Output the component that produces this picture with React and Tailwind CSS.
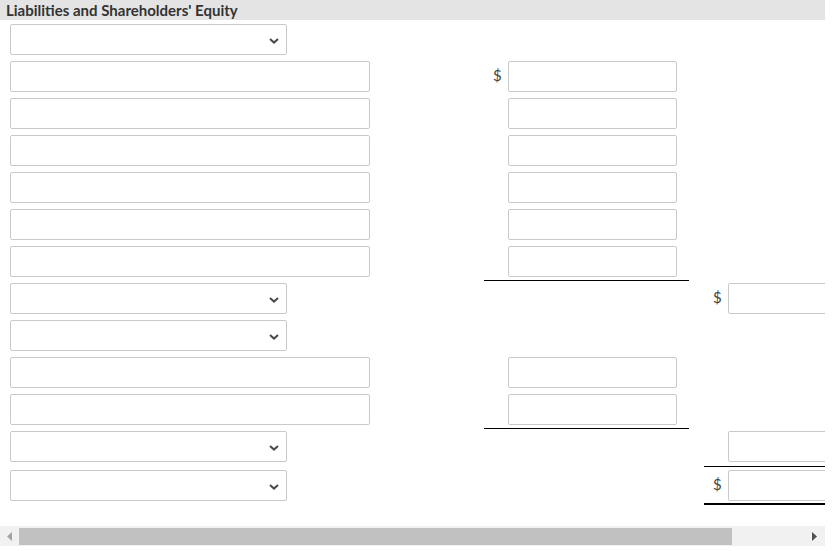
const Chevron = () => (
  <svg width="10" height="6" viewBox="0 0 10 6" className="absolute right-[7px] top-[13px]">
    <polyline points="1,1 5,4.6 9,1" fill="none" stroke="#4a4a4a" strokeWidth="2" />
  </svg>
);

const SelectBox = () => (
  <div className="relative w-[277px] h-[31px] border border-[#c9c9c9] rounded-[2px] bg-white">
    <Chevron />
  </div>
);

const TextBox = ({ w = "w-[360px]" }) => (
  <div className={`${w} h-[31px] shrink-0 border border-[#c9c9c9] rounded-[2px] bg-white`} />
);

const Dollar = () => (
  <span className="w-[24px] shrink-0 pl-[9px] pt-[5px] text-[15px] leading-[18px] text-[#444]">$</span>
);

// col2 cell: x 484..689
const Col2 = ({ input, dollar, line }) => (
  <div
    className={`w-[205px] h-[35px] flex ${line ? "border-b border-black" : ""}`}
  >
    {dollar ? <Dollar /> : <span className="w-[24px]" />}
    {input && <TextBox w="w-[169px]" />}
  </div>
);

// col3 cell: x 704.. (clipped at 825)
const Col3 = ({ input, dollar, line, double, tall }) => (
  <div
    className={`w-[150px] flex ${tall ? "h-[36px]" : "h-[35px]"} ${
      line ? "border-b border-black" : ""
    } ${double ? "border-b-2 border-black" : ""}`}
  >
    {dollar ? <Dollar /> : <span className="w-[24px] shrink-0" />}
    {input && <TextBox w="w-[126px]" />}
  </div>
);

const rows = [
  { c1: "select" },
  { c1: "text", c2: { input: true, dollar: true } },
  { c1: "text", c2: { input: true } },
  { c1: "text", c2: { input: true } },
  { c1: "text", c2: { input: true } },
  { c1: "text", c2: { input: true } },
  { c1: "text", c2: { input: true, line: true } },
  { c1: "select", c3: { input: true, dollar: true } },
  { c1: "select" },
  { c1: "text", c2: { input: true } },
  { c1: "text", c2: { input: true, line: true } },
  { c1: "select", c3: { input: true, line: true, tall: true }, h: "h-[39px]" },
  { c1: "select", c3: { input: true, dollar: true, double: true } },
];

export default function App() {
  return (
    <div
      className="w-[837px] h-[551px] bg-white overflow-hidden"
      style={{ fontFamily: "Lato, 'Open Sans', sans-serif" }}
    >
      <div className="w-[825px] overflow-hidden">
        <div className="h-[20px] bg-[#e4e4e4] pl-[6px] text-[15px] leading-[20px] font-bold text-[#333] whitespace-nowrap">
          Liabilities and Shareholders' Equity
        </div>
        <div className="pt-[4px] h-[506px]">
          {rows.map((r, i) => (
            <div key={i} className={`flex ${r.h || "h-[37px]"}`}>
              <div className="w-[484px] shrink-0 pl-[10px]">
                {r.c1 === "select" ? <SelectBox /> : <TextBox />}
              </div>
              <div className="w-[220px] shrink-0">{r.c2 && <Col2 {...r.c2} />}</div>
              <div className="shrink-0">{r.c3 && <Col3 {...r.c3} />}</div>
            </div>
          ))}
        </div>
        {/* horizontal scrollbar */}
        <div className="h-[20px] bg-[#f1f1f1] flex items-center">
          <div className="w-[19px] shrink-0 flex justify-center">
            <svg width="5" height="9" viewBox="0 0 5 9">
              <polygon points="5,0 0,4.5 5,9" fill="#a3a3a3" />
            </svg>
          </div>
          <div className="w-[713px] shrink-0 h-[17px] bg-[#c1c1c1]" />
          <div className="flex-1 flex justify-end pr-[8px]">
            <svg width="5" height="9" viewBox="0 0 5 9">
              <polygon points="0,0 5,4.5 0,9" fill="#505050" />
            </svg>
          </div>
        </div>
      </div>
    </div>
  );
}
